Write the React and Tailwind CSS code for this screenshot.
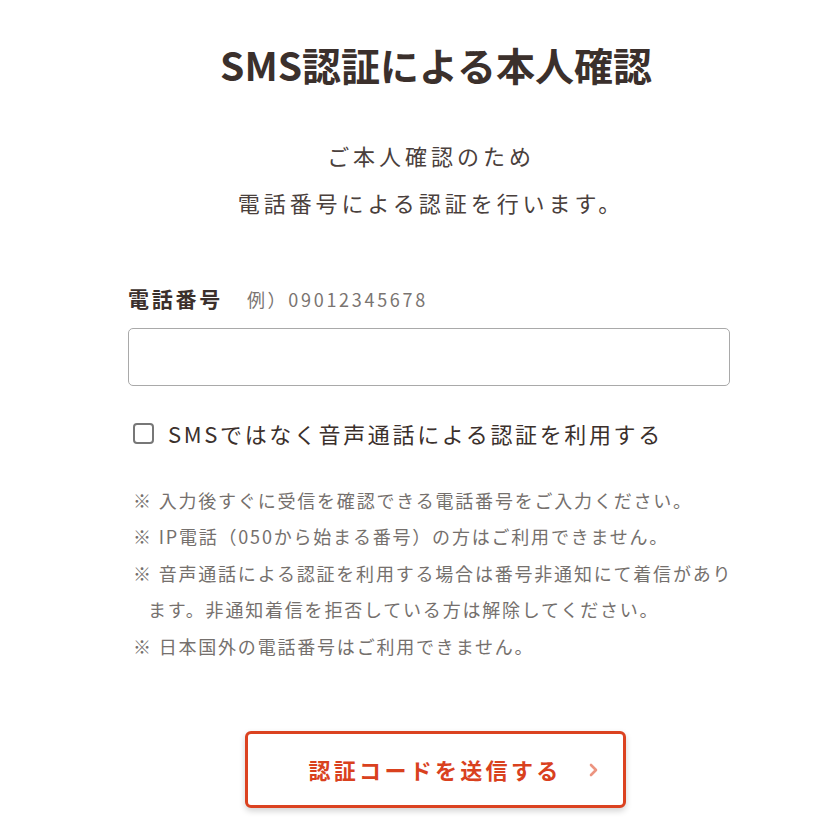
import React, { useState } from "react";

const notes = [
  ["入力後すぐに受信を確認できる電話番号をご入力ください。"],
  ["IP電話（050から始まる番号）の方はご利用できません。"],
  ["音声通話による認証を利用する場合は番号非通知にて着信があり", "ます。非通知着信を拒否している方は解除してください。"],
  ["日本国外の電話番号はご利用できません。"],
];

const App = () => {
  const [phone, setPhone] = useState("");
  const [useVoice, setUseVoice] = useState(false);

  return (
    <div
      className="min-h-screen bg-white text-[#3b302c] pl-[128px] pr-[99px]"
      style={{ fontFamily: '"Noto Sans CJK JP", "Noto Sans", sans-serif' }}
    >
      <h1 className="pt-[36px] pl-[14px] text-center text-[39px] font-bold leading-[56px]">
        SMS認証による本人確認
      </h1>

      <p className="mt-[40px] pl-[4px] text-center text-[22px] leading-[47px] tracking-[0.18em] text-[#4a403c]">
        ご本人確認のため
        <br />
        電話番号による認証を行います。
      </p>

      {/* Phone field */}
      <div className="mt-[57px]">
        <label className="flex items-baseline gap-[24px]">
          <span className="text-[21px] font-bold tracking-[0.13em]">電話番号</span>
          <span className="text-[18px] tracking-[0.15em] text-[#7a7471]">例）09012345678</span>
        </label>
        <input
          type="tel"
          value={phone}
          onChange={(e) => setPhone(e.target.value)}
          className="mt-[13px] block h-[58px] w-full rounded-[5px] border border-[#a9a9a9] px-4 text-[20px] outline-none"
        />
      </div>

      <label className="mt-[31px] flex cursor-pointer items-center gap-[14px] pl-[5px]">
        <span
          className={`flex h-[21px] w-[21px] items-center justify-center rounded-[4px] border-2 border-[#777] ${
            useVoice ? "bg-[#777]" : "bg-white"
          }`}
        >
          <input
            type="checkbox"
            checked={useVoice}
            onChange={(e) => setUseVoice(e.target.checked)}
            className="hidden"
          />
        </span>
        <span className="text-[22px] tracking-[0.12em]">SMSではなく音声通話による認証を利用する</span>
      </label>

      {/* Notes */}
      <ul className="-mr-[20px] mt-[32px] pl-[5px] text-[18px] leading-[36.5px] tracking-[0.1em] text-[#75706d]">
        {notes.map((lines) => (
          <li key={lines[0]} className="pl-[15px] -indent-[15px]">
            ※ {lines[0]}
            {lines[1] && (
              <>
                <br />
                {lines[1]}
              </>
            )}
          </li>
        ))}
      </ul>

      <div className="mt-[67px] flex justify-center pb-[20px] pl-[12px]">
        <button className="relative flex h-[77px] w-[381px] items-center justify-center rounded-[6px] border-[3px] border-[#db4220] bg-white shadow-[0_3px_6px_rgba(0,0,0,0.18)]">
          <span className="text-[22px] font-bold tracking-[0.15em] text-[#d9411e]">認証コードを送信する</span>
          <svg
            className="absolute right-[24px] top-1/2 -translate-y-1/2"
            width="10"
            height="14"
            viewBox="0 0 10 14"
            fill="none"
          >
            <path d="M2 2l5 5-5 5" stroke="#ec9480" strokeWidth="2.6" strokeLinecap="round" strokeLinejoin="round" />
          </svg>
        </button>
      </div>
    </div>
  );
};

export default App;
